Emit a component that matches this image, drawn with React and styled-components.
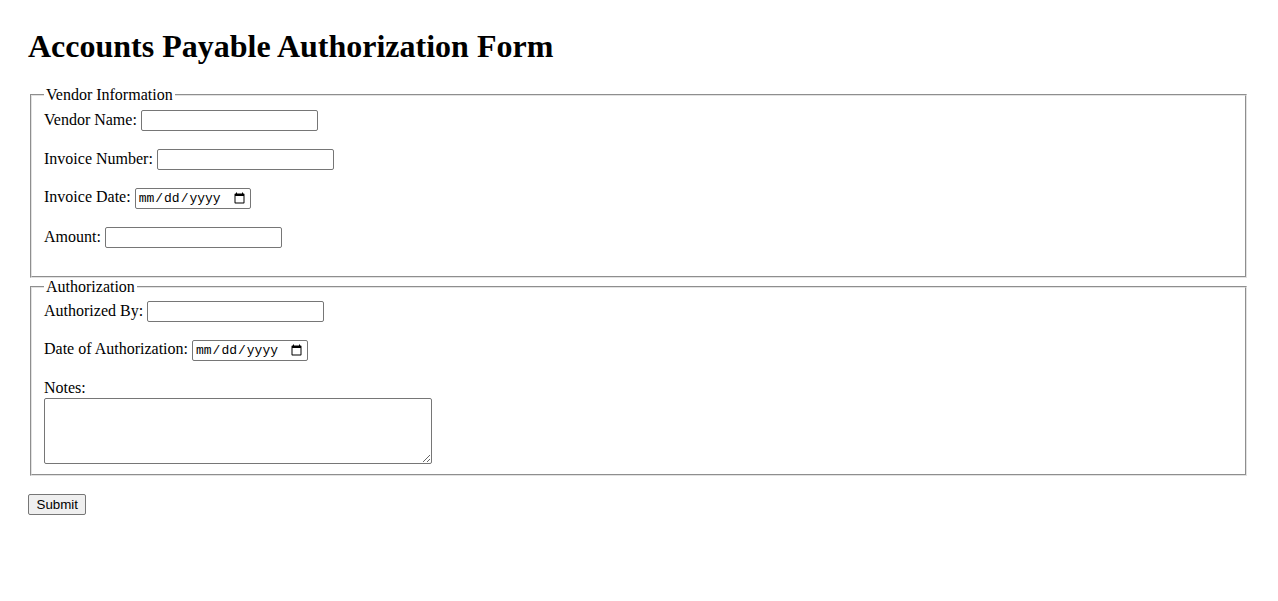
import React from 'react'
import styled, { createGlobalStyle } from 'styled-components'

const GlobalStyle = createGlobalStyle`
  html, body {
    margin: 0;
    padding: 0;
    background: #fff;
  }
  body {
    font-family: "Liberation Serif", "Times New Roman", serif;
    font-size: 16px;
    color: #000;
  }
`

const Page = styled.div`
  padding: 28px 29px 40px 28px;
`

const Title = styled.h1`
  font-size: 32px;
  font-weight: bold;
  margin: 0 0 21px;
  line-height: normal;
`

const Form = styled.form`
  margin: 0;
`

const Group = styled.fieldset`
  margin: 0 2px;
  padding: 5.6px 12px 10px;
  border: 2px groove #e2e2e2;
  min-width: 0;
`

const Legend = styled.legend`
  padding: 0 2px;
`

const Row = styled.div`
  margin-bottom: ${p => (p.$last ? '0' : '18px')};
`

const Label = styled.label`
  margin-right: 4px;
`

const TextInput = styled.input`
  box-sizing: border-box;
  width: 177px;
  height: 21px;
  padding: 1px 2px;
  border: 1px solid #767676;
  border-radius: 2px;
  font-family: "Liberation Sans", Arial, sans-serif;
  font-size: 13.333px;
`

const DateInput = styled.input`
  box-sizing: border-box;
  width: 116px;
  height: 21px;
  padding: 1px 2px;
  border: 1px solid #767676;
  border-radius: 2px;
  font-family: "Liberation Mono", "Courier New", monospace;
  font-size: 13px;
`

const Notes = styled.textarea`
  display: block;
  box-sizing: border-box;
  width: 388px;
  height: 66px;
  margin-top: 1px;
  padding: 2px;
  border: 1px solid #767676;
  border-radius: 2px;
  font-family: "Liberation Mono", monospace;
  font-size: 13.333px;
  resize: both;
`

const Actions = styled.div`
  margin-top: 18px;
`

const Button = styled.button`
  box-sizing: border-box;
  height: 21px;
  padding: 1px 7.5px;
  border: 1px solid #767676;
  border-radius: 2px;
  background: #efefef;
  color: #000;
  font-family: "Liberation Sans", Arial, sans-serif;
  font-size: 13.333px;
`

const vendorFields = [
  { id: 'vendor', label: 'Vendor Name:', type: 'text' },
  { id: 'invoice', label: 'Invoice Number:', type: 'text' },
  { id: 'invDate', label: 'Invoice Date:', type: 'date' },
  { id: 'amount', label: 'Amount:', type: 'text' },
]

export default function App() {
  return (
    <Page>
      <GlobalStyle />
      <Title>Accounts Payable Authorization Form</Title>
      <Form onSubmit={e => e.preventDefault()}>
        <Group>
          <Legend>Vendor Information</Legend>
          {vendorFields.map(f => (
            <Row key={f.id}>
              <Label htmlFor={f.id}>{f.label}</Label>
              {f.type === 'date' ? <DateInput id={f.id} type="date" /> : <TextInput id={f.id} type="text" />}
            </Row>
          ))}
        </Group>
        <Group>
          <Legend>Authorization</Legend>
          <Row>
            <Label htmlFor="authBy">Authorized By:</Label>
            <TextInput id="authBy" type="text" />
          </Row>
          <Row>
            <Label htmlFor="authDate">Date of Authorization:</Label>
            <DateInput id="authDate" type="date" />
          </Row>
          <Row $last>
            <label htmlFor="notes">Notes:</label>
            <Notes id="notes" />
          </Row>
        </Group>
        <Actions>
          <Button type="submit">Submit</Button>
        </Actions>
      </Form>
    </Page>
  )
}
